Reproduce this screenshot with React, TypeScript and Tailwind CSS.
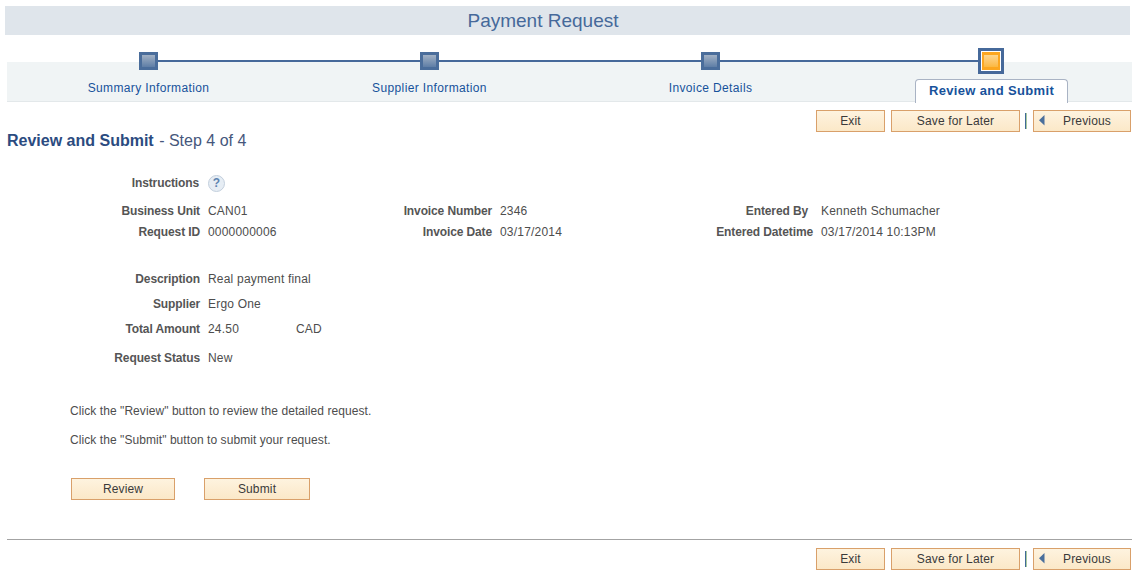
const STEPS = ['Summary Information', 'Supplier Information', 'Invoice Details', 'Review and Submit'];

function Btn({ label, className, arrow }: { label: string; className: string; arrow?: boolean }) {
  return (
    <button className={`relative h-[22px] border border-[#d9a06a] bg-gradient-to-b from-[#fef3df] to-[#fbe8c8] text-[12px] leading-[20px] tracking-[0.15px] text-[#3a3a3a] ${className}`}>
      {arrow && (
        <svg className="absolute left-[5px] top-[4px]" width="6" height="11" viewBox="0 0 6 11">
          <path d="M5.5 0V10.5L0 5.2Z" fill="#4a6f9c" />
        </svg>
      )}
      {label}
    </button>
  );
}

function Toolbar() {
  return (
    <div className="flex items-center justify-end pr-[11px]">
      <Btn label="Exit" className="w-[69px]" />
      <Btn label="Save for Later" className="ml-[6px] w-[129px]" />
      <span className="ml-[5px] h-[16px] w-[1px] bg-[#3f6a96]" />
      <span className="h-[16px] w-[1px] bg-[#a9c9a0]" />
      <Btn label="Previous" className="ml-[6px] w-[98px] pl-[10px]" arrow />
    </div>
  );
}

function Node({ current }: { current: boolean }) {
  if (current) {
    return (
      <span className="z-10 -ml-[1px] flex h-[26px] w-[26px] items-center justify-center border-[3px] border-[#46699a] bg-white">
        <span className="flex h-[18px] w-[18px] items-center justify-center bg-[#fca61f]">
          <span className="h-[12px] w-[14px] bg-gradient-to-b from-[#fdd68e] to-[#fcb83f]" />
        </span>
      </span>
    );
  }
  return (
    <span className="z-10 flex h-[18px] w-[19px] items-center justify-center bg-[#4a6d9b]">
      <span className="h-[12px] w-[13px] bg-gradient-to-b from-[#a2b1c4] to-[#5f7ea6]" />
    </span>
  );
}

function Train() {
  return (
    <div className="relative ml-[8px] mt-[13px] h-[54px] w-[1124px]">
      <div className="absolute -left-[1px] right-0 top-[14px] h-[40px] border-b border-[#e3e8ea] bg-[#f0f4f5]" />
      <div className="absolute left-[140px] top-[12px] h-[2px] w-[843px] bg-[#46699a]" />
      <div className="relative grid grid-cols-4">
        {STEPS.map((step, i) => (
          <div key={step} className="flex flex-col items-center">
            <div className="flex h-[26px] items-center justify-center">
              <Node current={i === 3} />
            </div>
            {i === 3 ? (
              <div className="mt-[5px] h-[24px] w-[153px] rounded-t-[4px] border border-b-0 border-[#a9b3c4] bg-white text-center text-[13px] font-bold leading-[21px] tracking-[0.35px] text-[#17529b]">
                {step}
              </div>
            ) : (
              <div className="mt-[6px] text-[12px] leading-[16px] tracking-[0.37px] text-[#17529b]">{step}</div>
            )}
          </div>
        ))}
      </div>
    </div>
  );
}

function Lbl({ className, children }: { className: string; children: string }) {
  return <span className={`shrink-0 text-right font-bold tracking-[-0.12px] text-[#555555] ${className}`}>{children}</span>;
}

function Val({ className, children }: { className: string; children: string }) {
  return <span className={`tracking-[0.2px] text-[#4d4d4d] ${className}`}>{children}</span>;
}

function Field({ label, value, className, extra }: { label: string; value: string; className: string; extra?: string }) {
  return (
    <div className={`ml-[7px] flex h-[21px] items-center ${className}`}>
      <Lbl className="w-[193px]">{label}</Lbl>
      <Val className={extra ? 'ml-[8px] w-[88px]' : 'ml-[8px]'}>{value}</Val>
      {extra && <Val className="">{extra}</Val>}
    </div>
  );
}

export default function App() {
  return (
    <div className="h-[587px] w-[1142px] overflow-hidden bg-white pt-[6px] font-['Liberation_Sans',Arial,sans-serif] text-[12px] leading-[16px]">
      <div className="ml-[5px] flex h-[29px] w-[1125px] items-center justify-center bg-[#dfe5eb] pr-[49px] text-[19px] text-[#46699a]">
        Payment Request
      </div>
      <Train />
      <div className="mt-[8px]">
        <Toolbar />
      </div>
      <div className="ml-[7px] mt-[-1px] text-[16px] leading-[20px] text-[#46577c]">
        <span className="font-bold text-[#2b4b80]">Review and Submit</span>
        <span className="ml-[1px]"> - Step 4 of 4</span>
      </div>

      <div className="ml-[7px] mt-[22px] flex h-[20px] items-center">
        <Lbl className="w-[192px]">Instructions</Lbl>
        <span className="ml-[9px] flex h-[17px] w-[17px] items-center justify-center rounded-full border border-[#c3cfdd] bg-[#e6edf4] text-[12px] font-bold text-[#5d83b0]">?</span>
      </div>

      <div className="ml-[7px] mt-[7px] flex h-[21px] items-center">
        <Lbl className="w-[193px]">Business Unit</Lbl>
        <Val className="ml-[8px] w-[184px]">CAN01</Val>
        <Lbl className="w-[100px]">Invoice Number</Lbl>
        <Val className="ml-[8px] w-[208px]">2346</Val>
        <Lbl className="w-[100px]">Entered By</Lbl>
        <Val className="ml-[13px]">Kenneth Schumacher</Val>
      </div>
      <div className="ml-[7px] flex h-[21px] items-center">
        <Lbl className="w-[193px]">Request ID</Lbl>
        <Val className="ml-[8px] w-[184px]">0000000006</Val>
        <Lbl className="w-[100px]">Invoice Date</Lbl>
        <Val className="ml-[8px] w-[208px]">03/17/2014</Val>
        <Lbl className="w-[105px]">Entered Datetime</Lbl>
        <Val className="ml-[8px]">03/17/2014 10:13PM</Val>
      </div>

      <Field label="Description" value="Real payment final" className="mt-[26px]" />
      <Field label="Supplier" value="Ergo One" className="mt-[4px]" />
      <Field label="Total Amount" value="24.50" className="mt-[4px]" extra="CAD" />
      <Field label="Request Status" value="New" className="mt-[8px]" />

      <p className="ml-[70px] mt-[33px] h-[21px] leading-[21px] tracking-[0.07px] text-[#4d4d4d]">Click the "Review" button to review the detailed request.</p>
      <p className="ml-[70px] mt-[8px] h-[21px] leading-[21px] tracking-[0.07px] text-[#4d4d4d]">Click the "Submit" button to submit your request.</p>

      <div className="ml-[71px] mt-[27px] flex">
        <Btn label="Review" className="w-[104px]" />
        <Btn label="Submit" className="ml-[29px] w-[106px]" />
      </div>

      <div className="ml-[7px] mt-[39px] w-[1125px] border-t border-[#a3a3a3]" />
      <div className="mt-[8px]">
        <Toolbar />
      </div>
    </div>
  );
}
